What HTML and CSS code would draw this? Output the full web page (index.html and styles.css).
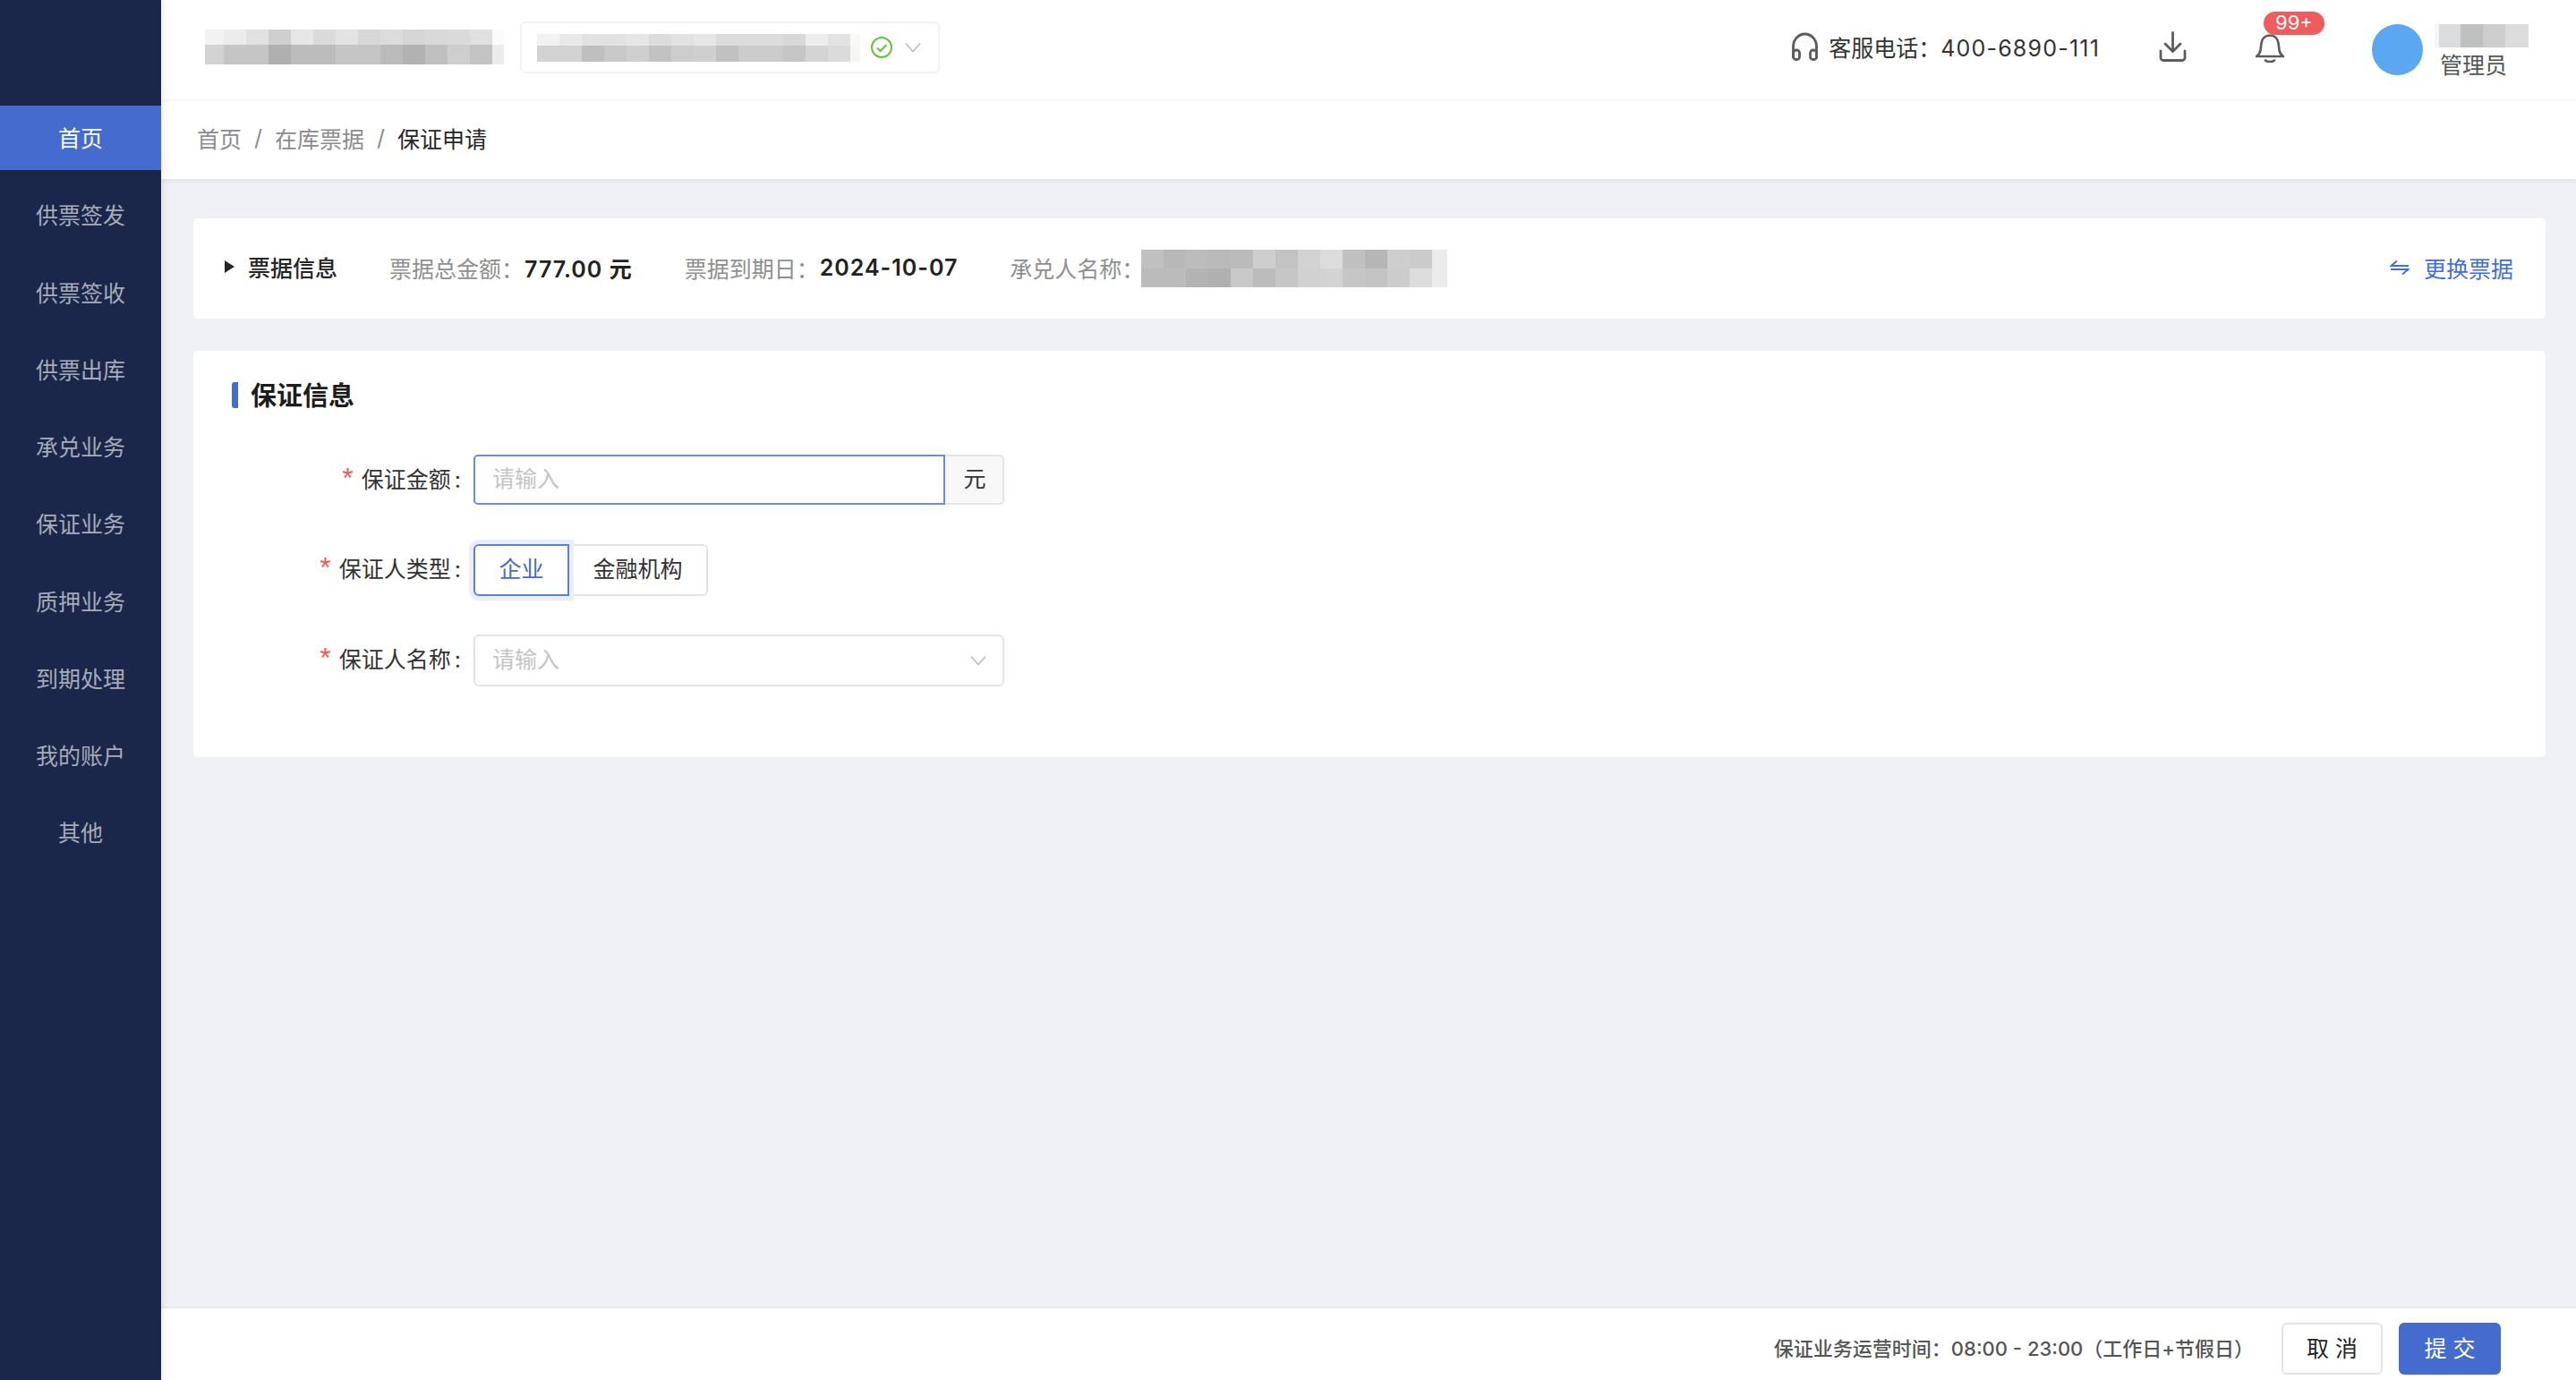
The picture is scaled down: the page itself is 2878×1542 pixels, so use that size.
FILE: index.html
```html
<!DOCTYPE html>
<html lang="zh-CN">
<head>
<meta charset="utf-8">
<title>保证申请</title>
<link rel="stylesheet" href="styles.css">
</head>
<body>
<aside class="sidebar">
  <nav class="menu">
    <a class="menu-item active">首页</a>
    <a class="menu-item">供票签发</a>
    <a class="menu-item">供票签收</a>
    <a class="menu-item">供票出库</a>
    <a class="menu-item">承兑业务</a>
    <a class="menu-item">保证业务</a>
    <a class="menu-item">质押业务</a>
    <a class="menu-item">到期处理</a>
    <a class="menu-item">我的账户</a>
    <a class="menu-item">其他</a>
  </nav>
</aside>
<div class="main">
  <header class="topbar">
    <div class="mosaic mosaic-logo"></div>
    <div class="org-select">
      <div class="mosaic mosaic-org"></div>
      <svg class="ok-icon" viewBox="0 0 24 24"><circle cx="12" cy="12" r="11"/><path d="M7 12.500l3.500 3.500L17.500 9"/></svg>
      <svg class="chev chev-top" viewBox="0 0 18 12"><path d="M1 1.500l8 9 8-9"/></svg>
    </div>
    <div class="top-right">
      <div class="phone">
        <svg class="icon-headset" viewBox="0 0 31 32"><path d="M2.500 29V16C2.500 8 8.500 2 15.500 2S28.500 8 28.500 16v13"/><rect x="2.500" y="20" width="7" height="10.500" rx="3"/><rect x="21.500" y="20" width="7" height="10.500" rx="3"/></svg>
        <span class="phone-text">客服电话：<span class="phone-num">400-6890-111</span></span>
      </div>
      <svg class="icon-download" viewBox="0 0 32 34"><path d="M15.500 1.500V22.500M7 14l8.500 8.500L24 14M2 22v7.500a3 3 0 0 0 3 3h21a3 3 0 0 0 3-3V22"/></svg>
      <div class="bell-wrap">
        <svg class="icon-bell" viewBox="0 0 34 32"><path d="M2 25c2.500-1.500 4-4 4.500-7l1-8C8 5 12 1.500 17 1.500S26 5 26.500 10l1 8c.5 3 2 5.500 4.500 7z"/><path d="M12 29.500c2.500 2 7.500 2 10 0"/></svg>
        <span class="badge">99+</span>
      </div>
      <div class="user">
        <div class="avatar"></div>
        <div class="user-info">
          <div class="mosaic mosaic-user"></div>
          <div class="user-role">管理员</div>
        </div>
      </div>
    </div>
  </header>
  <div class="crumbs">
    <span class="crumb">首页</span><span class="sep">/</span>
    <span class="crumb">在库票据</span><span class="sep">/</span>
    <span class="crumb current">保证申请</span>
  </div>
  <main class="content">
    <section class="card bill">
      <div class="bill-toggle"><i class="tri"></i>票据信息</div>
      <div class="bill-field"><span class="k">票据总金额：</span><b class="v">777.00 元</b></div>
      <div class="bill-field"><span class="k">票据到期日：</span><b class="v">2024-10-07</b></div>
      <div class="bill-field"><span class="k">承兑人名称：</span><div class="mosaic mosaic-name"></div></div>
      <a class="swap"><svg class="icon-swap" viewBox="0 0 22 18"><path d="M8 1.500L1.500 7H21M14 16.500L20.500 11H1"/></svg>更换票据</a>
    </section>
    <section class="card form-card">
      <h2 class="section-title">保证信息</h2>
      <div class="form-row">
        <label class="form-label"><em>*</em>保证金额<span class="colon">:</span></label>
        <div class="input-group">
          <div class="input focus"><span class="ph">请输入</span></div>
          <div class="addon">元</div>
        </div>
      </div>
      <div class="form-row">
        <label class="form-label"><em>*</em>保证人类型<span class="colon">:</span></label>
        <div class="radio-group">
          <div class="radio checked">企业</div>
          <div class="radio">金融机构</div>
        </div>
      </div>
      <div class="form-row">
        <label class="form-label"><em>*</em>保证人名称<span class="colon">:</span></label>
        <div class="select">
          <span class="ph">请输入</span>
          <svg class="chev chev-form" viewBox="0 0 18 12"><path d="M1 1.500l8 9 8-9"/></svg>
        </div>
      </div>
    </section>
  </main>
  <footer class="footer">
    <span class="hours">保证业务运营时间：08:00 - 23:00（工作日+节假日）</span>
    <button class="btn">取 消</button>
    <button class="btn primary">提 交</button>
  </footer>
</div>
</body>
</html>
```
FILE: styles.css
```css
* { box-sizing: border-box; }
html, body { height: 100%; }
body {
  margin: 0;
  display: flex;
  height: 1542px;
  overflow: hidden;
  background: #f0f1f5;
  color: #262626;
  font-family: "Inter", "Noto Sans CJK SC", sans-serif;
  font-size: 25px;
}
.sidebar { width: 180px; flex: none; background: #1a274a; padding-top: 118px; box-shadow: 2px 0 8px rgba(0,0,0,.08); position: relative; z-index: 2; }
.menu { display: flex; flex-direction: column; gap: 14.25px; }
.menu-item { height: 72px; display: flex; align-items: center; justify-content: center; color: #a6abb9; font-size: 25px; padding-bottom: 2px; }
.menu-item.active { background: #466bce; color: #fff; }
.main { flex: 1; min-width: 0; display: flex; flex-direction: column; }

.mosaic { flex: none; background-repeat: no-repeat; }
.topbar { height: 111px; flex: none; background: #fff; display: flex; align-items: center; padding: 0 0 0 49px; position: relative; z-index: 1; box-shadow: 0 1px 4px rgba(0,0,0,.06); }
.mosaic-logo {
  width: 334px; height: 39px; margin-top: -6px;
  background-image:
    linear-gradient(90deg,#f2f2f2 0 21px,#ebebeb 21px 46px,#e1e1e1 46px 71px,#cfcfcf 71px 96px,#e6e6e6 96px 121px,#dadada 121px 146px,#e3e3e3 146px 171px,#d7d7d7 171px 196px,#dcdcdc 196px 221px,#d6d6d6 221px 246px,#d9d9d9 246px 271px,#dadada 271px 296px,#e0e0e0 296px 321px,#fafafa 321px),
    linear-gradient(90deg,#d2d2d2 0 21px,#c5c5c5 21px 71px,#afafaf 71px 96px,#bcbcbc 96px 146px,#c5c5c5 146px 196px,#bbb 196px 221px,#b2b2b2 221px 246px,#c0c0c0 246px 271px,#cecece 271px 296px,#c3c3c3 296px 321px,#ececec 321px);
  background-size: 100% 17px, 100% 22px;
  background-position: 0 0, 0 17px;
}
.org-select { width: 469px; height: 58px; margin: -5px 0 0 18px; border: 2px solid #f1f2f4; border-radius: 6px; display: flex; align-items: center; padding: 0 0 0 17px; }
.mosaic-org {
  width: 361px; height: 31px;
  background-image:
    linear-gradient(90deg,#f2f2f2 0 25px,#e9e9e9 25px 50px,#e2e2e2 50px 100px,#e6e6e6 100px 125px,#dcdcdc 125px 150px,#e1e1e1 150px 175px,#e6e6e6 175px 200px,#dcdcdc 200px 275px,#d9d9d9 275px 300px,#ededed 300px 325px,#e3e3e3 325px 350px,#f8f9f5 350px),
    linear-gradient(90deg,#d2d2d2 0 50px,#bfbfbf 50px 75px,#c8c8c8 75px 100px,#cfcfcf 100px 125px,#c2c2c2 125px 150px,#cdcdcd 150px 175px,#cfcfcf 175px 200px,#c1c1c1 200px 225px,#ccc 225px 275px,#c6c6c6 275px 300px,#d4d4d4 300px 325px,#dbdbdb 325px 350px,#f5f7f2 350px);
  background-size: 100% 13px, 100% 18px;
  background-position: 0 0, 0 13px;
}
.ok-icon { width: 24px; height: 24px; margin-left: 12px; fill: none; stroke: #67c23a; stroke-width: 2; }
.chev { fill: none; stroke: #c0c0c0; stroke-width: 1.8; flex: none; }
.chev-top { width: 18px; height: 12px; margin-left: 14px; }
.top-right { margin-left: auto; margin-top: -3px; display: flex; align-items: center; }
.phone { display: flex; align-items: center; margin-right: 66px; }
.icon-headset { width: 31px; height: 32px; fill: none; stroke: #5c5c5c; stroke-width: 2.8; margin-bottom: 4px; }
.phone-text { margin-left: 11px; font-size: 25px; color: #333; padding-bottom: 4px; }
.phone-num { letter-spacing: 1.2px; }
.icon-download { width: 32px; height: 34px; fill: none; stroke: #5c5c5c; stroke-width: 2.8; stroke-linecap: round; stroke-linejoin: round; margin-right: 75px; margin-bottom: 5px; }
.bell-wrap { position: relative; width: 34px; height: 32px; margin-right: 97px; }
.icon-bell { display: block; width: 34px; height: 32px; fill: none; stroke: #5c5c5c; stroke-width: 2.6; stroke-linecap: round; stroke-linejoin: round; }
.badge { position: absolute; left: 10px; top: -25px; width: 68px; height: 26px; border-radius: 13px; background: #ef5c5b; color: #fff; font-size: 22px; line-height: 25px; text-align: center; }
.user { display: flex; align-items: flex-start; width: 228px; height: 57px; margin-top: 2px; }
.avatar { width: 57px; height: 57px; border-radius: 50%; background: #5ca7f2; flex: none; }
.user-info { margin-left: 13px; }
.mosaic-user {
  width: 105px; height: 26px;
  background-image: linear-gradient(90deg,#f4f6f8 0 5px,#dbdcde 5px 29px,#bfc0c0 29px 54px,#cdcdcd 54px 79px,#dcdcdc 79px);
}
.user-role { font-size: 25px; color: #555; line-height: 36px; margin: 2px 0 0 6px; }

.crumbs { height: 89px; flex: none; background: #fff; display: flex; align-items: center; padding: 0 0 4px 40px; box-shadow: 0 2px 6px rgba(0,0,0,.07); }
.crumb { color: #8c8c8c; }
.crumb.current { color: #262626; }
.sep { color: #8c8c8c; margin: 0 14px; }

.content { flex: 1; min-height: 0; padding: 44px 34px 0 36px; display: flex; flex-direction: column; gap: 36px; }
.card { background: #fff; border-radius: 5px; }
.bill { height: 112px; display: flex; align-items: center; padding: 0 36px 0 35px; }
.bill-toggle { display: flex; align-items: center; font-weight: 500; color: #262626; margin-right: 58px; padding-bottom: 4px; }
.tri { width: 0; height: 0; border-left: 11px solid #262626; border-top: 7px solid transparent; border-bottom: 7px solid transparent; margin-right: 15px; }
.bill-field { display: flex; align-items: center; margin-right: 58px; }
.k { color: #8f8f8f; margin-right: 1px; padding-bottom: 3px; }
.v { font-weight: 600; color: #222; letter-spacing: 1px; padding-bottom: 3px; }
.mosaic-name {
  width: 342px; height: 42px; margin-left: -4px;
  background-image:
    linear-gradient(90deg,#c0c0c0 0 25px,#b8b8b8 25px 50px,#bcbcbc 50px 75px,#b9b9b9 75px 100px,#bbb 100px 125px,#cecece 125px 150px,#c3c3c3 150px 175px,#d2d2d2 175px 200px,#dcdcdc 200px 225px,#c0c0c0 225px 250px,#b6b6b6 250px 275px,#cecece 275px 300px,#cbcbcb 300px 325px,#ebebeb 325px),
    linear-gradient(90deg,#bbb 0 50px,#b3b3b3 50px 75px,#b0b0b0 75px 100px,#c8c8c8 100px 125px,#bcbcbc 125px 150px,#c6c6c6 150px 175px,#d1d1d1 175px 200px,#d3d3d3 200px 225px,#c6c6c6 225px 250px,#c4c4c4 250px 275px,#ccc 275px 300px,#dcdcdc 300px 325px,#ebebeb 325px);
  background-size: 100% 21px, 100% 21px;
  background-position: 0 0, 0 21px;
}
.swap { margin-left: auto; display: flex; align-items: center; color: #3f6fd8; padding-bottom: 3px; }
.icon-swap { width: 22px; height: 18px; margin-right: 16px; fill: none; stroke: #3f6fd8; stroke-width: 2; }

.form-card { height: 454px; padding: 35px 0 0 43px; }
.section-title { margin: 0 0 52px; height: 29px; display: flex; align-items: center; font-size: 29px; font-weight: 700; color: #1c1c1c; border-left: 7px solid #466bce; padding: 0 0 3px 14px; border-radius: 3px; }
.form-row { display: flex; align-items: center; margin-bottom: 43px; margin-left: -43px; }
.form-label { width: 299px; flex: none; text-align: right; color: #333; margin-right: 14px; white-space: nowrap; padding-bottom: 6px; }
.form-label em { color: #f05a5a; font: normal 32px/1 "Liberation Sans", sans-serif; margin-right: 9px; }
.colon { margin-left: 4px; }
.input-group { display: flex; width: 593px; height: 56px; margin-bottom: 1px; }
.input { flex: 1; border: 2px solid #6a8de0; border-radius: 5px 0 0 5px; display: flex; align-items: center; padding-left: 19px; }
.ph { color: #c4c4c4; padding-bottom: 6px; }
.addon { width: 66px; flex: none; background: #f8f8f8; border: 2px solid #e6e6e6; border-left: 0; border-radius: 0 5px 5px 0; display: flex; align-items: center; justify-content: center; color: #333; padding: 0 0 6px 2px; }
.radio-group { display: flex; height: 58px; }
.radio { display: flex; align-items: center; justify-content: center; border: 2px solid #e4e4e4; width: 155px; border-left: 0; border-radius: 0 6px 6px 0; color: #333; padding-bottom: 6px; }
.radio.checked { width: 107px; border: 2px solid #5d7fd6; border-radius: 6px 0 0 6px; color: #466bce; box-shadow: 0 0 0 5px #ebeef9; position: relative; }
.select { width: 593px; height: 58px; border: 2px solid #e4e4e4; border-radius: 6px; display: flex; align-items: center; padding: 0 18px 0 19px; }
.chev-form { width: 18px; height: 12px; margin-left: auto; }

.footer { height: 82px; flex: none; background: #fff; border-top: 2px solid #ebebeb; display: flex; align-items: center; justify-content: flex-end; padding: 16px 84px 6px 0; }
.hours { font-size: 22px; font-weight: 500; color: #555; margin-right: 31px; padding-bottom: 4px; }
.btn { height: 58px; width: 113px; font: inherit; border: 2px solid #e4e4e4; border-radius: 6px; background: #fff; color: #262626; margin: 0; padding: 0 0 4px; }
.btn.primary { width: 114px; margin-left: 18px; background: #466bce; border-color: #466bce; color: #fff; }
```
